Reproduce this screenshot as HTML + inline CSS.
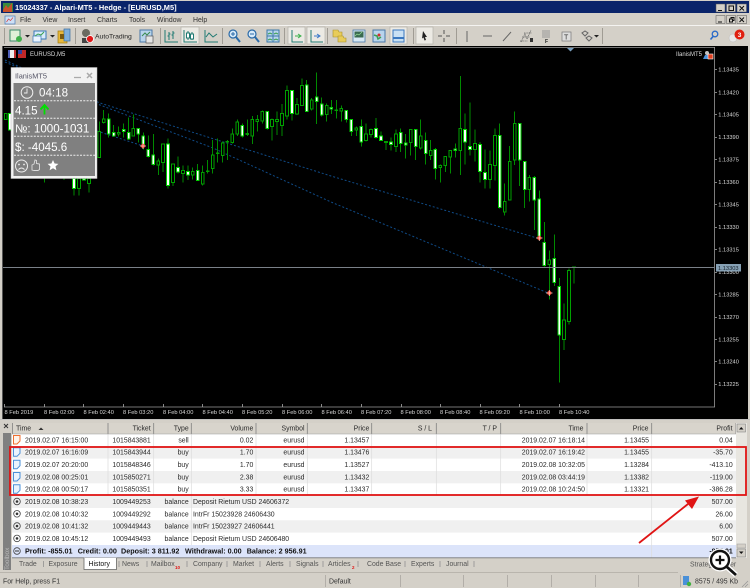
<!DOCTYPE html>
<html><head><meta charset="utf-8"><title>MT5</title>
<style>
html,body{margin:0;padding:0;background:#d4d0c8;width:750px;height:588px;overflow:hidden}
svg{display:block}
text{font-family:"Liberation Sans",sans-serif;font-size:6.9px;fill:#2a2a2a}
.e{text-anchor:end}
.ax{font-size:5.7px;fill:#d8d8d8}
.p{font-size:11.6px;fill:#fff}
.m{font-size:6.9px;fill:#333}
.t{font-size:6.9px;fill:#555}
.w{stroke:#008a00;stroke-width:3;fill:none}
.wb{fill:#fff;stroke:#00d000;stroke-width:2.6}
.hb{fill:#000;stroke:#00a000;stroke-width:3}
.c{shape-rendering:crispEdges}
.tl{fill:none;stroke:#0f4a86;stroke-width:1;stroke-dasharray:2 2}
</style></head><body>
<svg width="750" height="588" viewBox="0 0 750 588" xmlns="http://www.w3.org/2000/svg">
<rect width="750" height="588" fill="#d4d0c8"/>
<!-- title bar -->
<rect x="1" y="1" width="748" height="12" fill="#0a246a"/>
<rect x="3" y="3" width="10" height="9" fill="#3a8a3a"/><path d="M3 10l3-5 2 3 4-5v9H3z" fill="#c8502a"/>
<text x="15" y="10" style="font-size:7.4px;font-weight:bold;fill:#fff">15024337 - Alpari-MT5 - Hedge - [EURUSD,M5]</text>
<g fill="#d4d0c8" stroke="#555" stroke-width=".5">
<rect x="716" y="4" width="9" height="8"/><rect x="726.5" y="4" width="9" height="8"/><rect x="737" y="4" width="9.5" height="8"/>
<rect x="716" y="15.5" width="9" height="8"/><rect x="726.5" y="15.5" width="9" height="8"/><rect x="737" y="15.5" width="9.5" height="8"/>
</g>
<g fill="none" stroke="#111" stroke-width="1">
<path d="M718 10.5h4M729 6h4.5v4.5h-4.5zM739.5 6l4.5 4.5M744 6l-4.5 4.5"/>
<path d="M718 22h4M729.5 19h3v3h-3zM731 19v-1.5h3v3h-1.5M739.5 17.5l4.5 4.5M744 17.5l-4.5 4.5"/>
</g>
<!-- menu -->
<rect x="5" y="16" width="10" height="8" fill="#cfe0f5" stroke="#4a7ab5" stroke-width=".7"/><path d="M6.5 22l2-3 2 1.5 2.5-3" stroke="#d04040" fill="none" stroke-width=".7"/>
<text class="m" x="20" y="22">File</text><text class="m" x="42.5" y="22">View</text><text class="m" x="68" y="22">Insert</text><text class="m" x="97" y="22">Charts</text><text class="m" x="129" y="22">Tools</text><text class="m" x="157" y="22">Window</text><text class="m" x="193" y="22">Help</text>
<path d="M0 25.5h750" stroke="#fff" stroke-width=".7"/>
<!-- toolbar -->
<g stroke="#a09c94" stroke-width="1">
<path d="M4.5 28v16M75.5 28v16M160.5 28v16M222.5 28v16M284.5 28v16M327.5 28v16M413.5 28v16M456.5 28v16M602.5 28v16"/>
</g>
<g fill="#eceae4" stroke="#b5b2aa" stroke-width=".7">
<rect x="181" y="27" width="18" height="17"/><rect x="288" y="27" width="17" height="17"/><rect x="307" y="27" width="18" height="17"/><rect x="390" y="27" width="17" height="17"/><rect x="416" y="27" width="17" height="17"/>
</g>
<!-- left icons -->
<rect x="10" y="30" width="10" height="11" fill="#dff0d8" stroke="#3b8a6a"/><circle cx="19" cy="39" r="3" fill="#3fb04a"/>
<path d="M25 35h5l-2.5 2.5z M50 35h5l-2.5 2.5z M594 35h5l-2.5 2.5z" fill="#222"/>
<rect x="34" y="31" width="12" height="8" fill="#d8ebfa" stroke="#3a78b8"/><rect x="33" y="36" width="8" height="6" fill="#eaf4ff" stroke="#3a78b8" stroke-width=".7"/><path d="M35 36l3-2 3 1 3-3" stroke="#3aa050" fill="none"/>
<rect x="58" y="31" width="9" height="12" fill="#e8b83a" stroke="#a07a10" stroke-width=".7"/><rect x="64" y="29" width="6" height="12" fill="#7fb0dc" stroke="#3a6ea0" stroke-width=".7"/><rect x="60" y="34" width="4" height="5" fill="#7a5a10"/>
<circle cx="86" cy="33" r="4" fill="#6a6a60"/><path d="M82 38h9v5h-9z" fill="#444"/><circle cx="90" cy="39" r="3.5" fill="#e01818" stroke="#fff" stroke-width=".8"/>
<text x="95" y="38.5" style="font-size:6.8px;fill:#222">AutoTrading</text>
<rect x="140" y="30" width="12" height="12" fill="#b8d4ec" stroke="#4a78a8"/><rect x="146" y="36" width="7" height="7" fill="#e6e6e6" stroke="#555" stroke-width=".7"/><path d="M142 36l3-3 2 2 3-3" stroke="#3a8a50" fill="none"/>
<!-- chart type -->
<g fill="none" stroke="#1f7a72" stroke-width="1">
<path d="M165 30v12h13M169 32v8M167.5 36h1.5M169 34h1.5M173 31v8M171.5 35h1.5M173 33h1.5"/>
<path d="M184 30v12h13M188 31v9M192 32v8" />
<rect x="186.5" y="33" width="3" height="5" fill="#fff"/><rect x="190.5" y="34" width="3" height="5" fill="#fff"/>
<path d="M205 30v12h13M206 37l3-4 4 4 4-3" />
</g>
<g fill="#d8ebfa" stroke="#2a6aa8" stroke-width="1.2">
<circle cx="233" cy="34" r="4"/><circle cx="252" cy="34" r="4"/>
</g>
<path d="M236 37l4 5M255 37l4 5" stroke="#2a6aa8" stroke-width="2"/>
<path d="M231 34h4M233 32v4M250 34h4" stroke="#2a6aa8"/>
<rect x="267" y="30" width="12" height="12" fill="#b8d4ec" stroke="#3a78a8"/><path d="M267 36h12M273 30v12" stroke="#3a78a8"/><path d="M268 34l2-1 2 1M274 34l2-1 2 1M268 40l2-1 2 1M274 40l2-1 2 1" stroke="#3aa050" fill="none"/>
<g fill="none" stroke="#1f7a72"><path d="M292 30v12h11"/><path d="M311 30v12h12"/></g>
<path d="M295 36h5M298 34l3 2-3 2" stroke="#3ab04a" fill="none"/><path d="M314 36h5M317 34l3 2-3 2" stroke="#3a78c8" fill="none"/>
<path d="M333 30h5l1 2h3v5h-9z" fill="#e8cc5a" stroke="#a8902a" stroke-width=".6"/><path d="M338 36h5l1 2h2v4h-8z" fill="#e8cc5a" stroke="#a8902a" stroke-width=".6"/>
<rect x="353" y="30" width="12" height="12" fill="#d8e8f4" stroke="#4a78a8" stroke-width=".8"/><rect x="354.5" y="31.5" width="9" height="6" fill="#3a6a50"/><path d="M355 36l2-2 2 1 3-3" stroke="#9ae09a" fill="none" stroke-width=".7"/>
<rect x="373" y="30" width="12" height="12" fill="#b8d4ec" stroke="#4a78a8"/><path d="M374 35l3 1 1 3 3-2" stroke="#3aa050" fill="none" stroke-width="1.5"/><circle cx="379" cy="35" r="1.5" fill="#d03030"/>
<rect x="393" y="30" width="11" height="12" fill="#c8e0f4" stroke="#3a78c0"/><rect x="393" y="37" width="11" height="2" fill="#3a78c0"/>
<!-- drawing -->
<path d="M423 31l4 6-2 0 1 3-1.5.5-1-3-1.5 1z" fill="#222"/>
<path d="M444 30v4M444 38v4M438 36h4M446 36h4" stroke="#555"/>
<path d="M467 31v11M483 36h9M503 41l8-9" stroke="#666" stroke-width="1"/>
<path d="M521 42l4-8 2 5 4-9M524 33h8M522 37h8M520 41h8" stroke="#666" stroke-width=".8" fill="none" stroke-dasharray="1 .6"/><rect x="530" y="38" width="3" height="4" fill="#333"/>
<path d="M542 31h8M542 33h8M542 35h8M542 37h8" stroke="#999"/><text x="545" y="43" style="font-size:5px;font-weight:bold;fill:#222">F</text>
<rect x="562" y="32" width="9" height="9" fill="#ddd" stroke="#777" stroke-width=".7"/><text x="564" y="39.5" style="font-size:7px;fill:#333">T</text>
<path d="M582 33l3 3 3-3-3-2zM586 38l3 3 3-3-3-2z" fill="none" stroke="#666"/>
<circle cx="715" cy="34" r="2.8" fill="none" stroke="#2a6ac8" stroke-width="1.3"/><path d="M713 36.5l-2.5 3" stroke="#2a6ac8" stroke-width="1.6"/>
<circle cx="733" cy="38" r="4" fill="#e8e8e8" stroke="#bbb" stroke-width=".5"/><circle cx="739.5" cy="34.5" r="5" fill="#e02010"/><text x="737.8" y="37" style="font-size:6.5px;font-weight:bold;fill:#fff">3</text>
<!-- chart -->
<rect x="3" y="46" width="745" height="373" fill="#000"/>
<path d="M4 47.5h711M714.5 47v360M4 407h711" stroke="#9a9a9a" stroke-width=".8" fill="none"/>
<path d="M2.5 46v373" stroke="#555"/>
<path d="M567 48h7l-3.5 3.5z" fill="#7aa0c0"/>
<rect x="8" y="50" width="8" height="8" fill="#c03030"/><rect x="10" y="50" width="4" height="8" fill="#f0f0f0"/><rect x="8" y="50" width="2" height="8" fill="#5060b8"/>
<rect x="18" y="50" width="8" height="8" fill="#c02828"/><rect x="18" y="50" width="4" height="4" fill="#3040a0"/>
<text x="30" y="56.2" style="font-size:6px;fill:#ddd">EURUSD,M5</text>
<text x="676" y="56.2" style="font-size:6px;fill:#ddd">IlanisMT5</text>
<circle cx="707" cy="53" r="2" fill="#c0c0c0"/><path d="M703 59l2-4h3v4z" fill="#4a90d8"/><rect x="708" y="54" width="5" height="5" fill="#e04020" stroke="#fff" stroke-width=".6"/>
<!-- grid ticks -->
<path d="M4.5 404v3M44.5 404v3M83.5 404v3M123.5 404v3M163.5 404v3M202.5 404v3M242.5 404v3M282.5 404v3M321.5 404v3M361.5 404v3M401.5 404v3M440.5 404v3M480.5 404v3M519.5 404v3M559.5 404v3" stroke="#aaa" stroke-width=".8"/>
<path d="M715 69.5h2M715 92.5h2M715 114.5h2M715 137.5h2M715 159.5h2M715 182.5h2M715 204.5h2M715 227.5h2M715 249.5h2M715 272.5h2M715 294.5h2M715 317.5h2M715 339.5h2M715 361.5h2M715 384.5h2" stroke="#aaa" stroke-width=".8"/>
<g class="axg">
<text class="ax" x="718.3" y="71.3">1.13435</text><text class="ax" x="718.3" y="94.3">1.13420</text><text class="ax" x="718.3" y="116.7">1.13405</text><text class="ax" x="718.3" y="139">1.13390</text><text class="ax" x="718.3" y="161.7">1.13375</text><text class="ax" x="718.3" y="184">1.13360</text><text class="ax" x="718.3" y="206.7">1.13345</text><text class="ax" x="718.3" y="229">1.13330</text><text class="ax" x="718.3" y="251.5">1.13315</text><text class="ax" x="718.3" y="274">1.13300</text><text class="ax" x="718.3" y="296.5">1.13285</text><text class="ax" x="718.3" y="319">1.13270</text><text class="ax" x="718.3" y="341.5">1.13255</text><text class="ax" x="718.3" y="363.5">1.13240</text><text class="ax" x="718.3" y="386">1.13225</text>
<text class="ax" x="4.5" y="414">8 Feb 2019</text><text class="ax" x="44" y="414">8 Feb 02:00</text><text class="ax" x="83.5" y="414">8 Feb 02:40</text><text class="ax" x="123" y="414">8 Feb 03:20</text><text class="ax" x="163" y="414">8 Feb 04:00</text><text class="ax" x="202.5" y="414">8 Feb 04:40</text><text class="ax" x="242" y="414">8 Feb 05:20</text><text class="ax" x="282" y="414">8 Feb 06:00</text><text class="ax" x="321.5" y="414">8 Feb 06:40</text><text class="ax" x="361" y="414">8 Feb 07:20</text><text class="ax" x="400.5" y="414">8 Feb 08:00</text><text class="ax" x="440" y="414">8 Feb 08:40</text><text class="ax" x="479.5" y="414">8 Feb 09:20</text><text class="ax" x="519.5" y="414">8 Feb 10:00</text><text class="ax" x="559" y="414">8 Feb 10:40</text>
</g>
<!-- trend lines -->
<path class="tl" d="M5 62L100 103L331 176L537 238"/>
<path class="tl" d="M5 60L100 105L213 148L331 202L548 293"/>
<path class="tl" d="M97 131L143 146"/>
<!-- candles G3 -->
<g class="c" transform="translate(0,60) scale(.33333)">
<path class="w" d="M17 160V178M30 160V210M133 355V368M192 355V360M222 355V407M237 355V407M252 355V360M267 355V398M298 185V292"/>
<path class="wb" d="M26 160h8V210h-8zM218 355h8V385h-8zM248 355h8V360h-8z"/>
<path class="hb" d="M13 160h8V178h-8zM233 355h8V385h-8zM263 355h8V370h-8zM294 215h8V292h-8z"/>
</g>
<!-- candles G6 -->
<g class="c" transform="translate(100,60) scale(.33333)">
<path class="w" d="M11 150V190M26 160V232M41 195V230M56 200V230M71 190V232M86 173V240M100 163V230M115 205V248M130 218V268M145 226V292M160 222V316M175 295V345M189 252V336M204 236V386M219 312V378M234 290V340M249 316V368M264 316V360M278 322V358M293 312V362M308 316V376M323 300V340M338 240V340M353 236V308M368 244V308M382 240V300M397 205V250M412 178V228M427 190V232M442 178V228M457 168V252M472 165V215M487 151V190M502 153V208M516 176V242M531 155V225M546 132V228M561 76V178M576 90V182M591 114V165M606 56V138M620 60V156M635 114V152M650 38V192M665 112V170M680 130V185"/>
<path class="wb" d="M22 177h8V222h-8zM37 218h8V228h-8zM67 208h8V215h-8zM82 218h8V237h-8zM111 205h8V222h-8zM126 228h8V258h-8zM141 268h8V290h-8zM156 285h8V314h-8zM200 252h8V376h-8zM230 322h8V336h-8zM260 335h8V345h-8zM289 331h8V361h-8zM423 196h8V228h-8zM498 155h8V205h-8zM572 92h8V160h-8zM616 75h8V155h-8zM646 111h8V124h-8zM661 132h8V165h-8z"/>
<path class="hb" d="M7 177h8V187h-8zM52 217h8V222h-8zM96 205h8V228h-8zM171 303h8V315h-8zM185 252h8V308h-8zM215 312h8V368h-8zM245 332h8V341h-8zM274 335h8V345h-8zM304 338h8V372h-8zM334 285h8V325h-8zM364 249h8V287h-8zM393 222h8V248h-8zM408 186h8V222h-8zM453 178h8V228h-8zM468 178h8V185h-8zM483 154h8V183h-8zM512 178h8V200h-8zM527 178h8V185h-8zM542 160h8V197h-8zM557 92h8V168h-8zM587 133h8V162h-8zM602 76h8V136h-8zM631 120h8V147h-8zM676 136h8V164h-8zM319 333h8V335h-8zM349 279h8V281h-8zM378 244h8V246h-8zM438 221h8V223h-8z"/>
</g>
<!-- candles G7 -->
<g class="c" transform="translate(330,60) scale(.33333)">
<path class="w" d="M4 120V162M19 120V175M34 136V184M49 151V188M64 178V228M79 200V228M94 178V260M108 190V245M123 205V232M138 174V235M153 214V243M168 245V270M183 232V272M198 208V276M212 205V276M227 222V296M242 208V286M257 208V300M272 178V268M287 218V314M302 240V300M316 264V358M331 314V368M346 290V336M361 270V340M376 250V292M391 48V345M405 160V314M420 128V286M435 208V304M450 246V368M465 268V386M480 272V386M495 205V362M509 190V445M524 370V466M539 258V422M554 154V315M569 190V378M584 304V444M598 345V425M613 348V510M628 392V534"/>
<path class="wb" d="M0 142h8V147h-8zM45 152h8V178h-8zM60 178h8V215h-8zM90 200h8V246h-8zM134 205h8V232h-8zM149 228h8V241h-8zM179 246h8V254h-8zM208 218h8V250h-8zM223 249h8V255h-8zM253 208h8V260h-8zM283 241h8V281h-8zM312 268h8V326h-8zM372 267h8V272h-8zM401 208h8V246h-8zM416 259h8V268h-8zM446 254h8V335h-8zM461 338h8V358h-8zM505 227h8V443h-8zM565 190h8V300h-8zM580 304h8V389h-8zM609 353h8V420h-8zM624 417h8V534h-8z"/>
<path class="hb" d="M30 145h8V153h-8zM75 204h8V210h-8zM104 222h8V241h-8zM119 208h8V223h-8zM194 222h8V260h-8zM238 208h8V247h-8zM268 228h8V264h-8zM298 272h8V287h-8zM327 316h8V323h-8zM342 290h8V317h-8zM357 272h8V291h-8zM387 205h8V272h-8zM431 250h8V268h-8zM476 314h8V358h-8zM491 227h8V316h-8zM520 424h8V456h-8zM535 304h8V420h-8zM550 190h8V300h-8zM594 353h8V389h-8zM15 150h8V152h-8zM164 245h8V247h-8z"/>
</g>
<!-- candles G8 -->
<g class="c" transform="translate(480,200) scale(.33333)">
<path class="w" d="M193 66V200M208 152V298M223 104V258M238 234V548M252 310V450M267 205V373M282 200V250"/>
<path class="wb" d="M189 127h8V197h-8zM219 175h8V247h-8zM234 260h8V405h-8z"/>
<path class="hb" d="M204 180h8V194h-8zM248 360h8V418h-8zM263 212h8V364h-8zM278 201h8V203h-8z"/>
</g>
<!-- horizontal line -->
<path d="M3 267.5h712" stroke="#7a8088" stroke-width=".9"/>
<rect x="716" y="264" width="25" height="7.5" fill="#86a0b4"/>
<text x="718" y="270" style="font-size:5.7px;fill:#15202a">1.13303</text>
<!-- markers -->
<g>
<circle cx="143" cy="146" r="2.2" fill="#f03020"/><path d="M140 146h6M143 143v6" stroke="#ffd0c0" stroke-width=".8"/>
<circle cx="539.3" cy="238" r="2.2" fill="#f03020"/><path d="M536 238h6.5M539.3 235v6" stroke="#ffd0c0" stroke-width=".8"/>
<circle cx="549.3" cy="293" r="2.2" fill="#f03020"/><path d="M546 293h6.5M549.3 290v6" stroke="#ffd0c0" stroke-width=".8"/>
</g>
<!-- panel -->
<rect x="11" y="67.5" width="86" height="111" fill="#f2f2f2" stroke="#bbb" stroke-width=".5"/>
<rect x="13.5" y="83" width="81.5" height="93" fill="#808080"/>
<text x="15" y="78.5" style="font-size:7.4px;fill:#556">IlanisMT5</text>
<path d="M74 77.5h7" stroke="#aaa" stroke-width="1.3"/><path d="M87 73l5 5M92 73l-5 5" stroke="#aaa" stroke-width="1.5"/>
<path d="M14 100.8h81M14 118.2h81M14 136.2h81M14 155.2h81" stroke="#eee" stroke-width="1" stroke-dasharray="2 1.3"/>
<circle cx="27" cy="92.5" r="5.8" fill="none" stroke="#eee" stroke-width="1"/><path d="M27 88.5v4.5h-3" fill="none" stroke="#eee" stroke-width=".9"/>
<text class="p" x="39" y="96.5">04:18</text>
<text class="p" x="15" y="114.5">4.15</text>
<path d="M44.5 114.5v-9M40.5 109.5l4-4.5 4 4.5" fill="none" stroke="#00e000" stroke-width="1.8"/>
<text class="p" x="15" y="132.5">№: 1000-1031</text>
<text class="p" x="15" y="151">$: -4045.6</text>
<circle cx="21.5" cy="166" r="6" fill="none" stroke="#eee" stroke-width="1"/><circle cx="19" cy="164.5" r=".9" fill="#eee"/><circle cx="24" cy="164.5" r=".9" fill="#eee"/><path d="M18.5 169.5q3-3 6 0" fill="none" stroke="#eee" stroke-width=".9"/>
<path d="M32 170v-5l2-1 1-4 1.5.5v3l3 .5v5.5l-1.5 1h-4z" fill="none" stroke="#ddd" stroke-width=".9"/>
<path d="M53 160l1.6 3.5 3.8.4-2.9 2.5.9 3.8-3.4-2-3.4 2 .9-3.8-2.900-2.5 3.800-.4z" fill="#fff"/>
<!-- toolbox frame -->
<rect x="0" y="419" width="750" height="154" fill="#d4d0c8"/>
<path d="M0 419.5h750" stroke="#bbb" stroke-width=".7"/>
<path d="M4 424l4 4M8 424l-4 4" stroke="#333" stroke-width="1"/>
<rect x="3" y="433" width="8" height="137" fill="#808080"/>
<text transform="translate(9,570) rotate(-90)" style="font-size:6.5px;fill:#b8b8b8">Toolbox</text>
<!-- table -->
<rect x="12" y="423" width="724" height="135" fill="#fff"/>
<rect x="12" y="423" width="724" height="11" fill="#d8d4cc"/>
<g fill="#f0f0f0">
<rect x="12" y="446.3" width="724" height="12.3"/><rect x="12" y="471" width="724" height="12.3"/><rect x="12" y="495.7" width="724" height="12.3"/><rect x="12" y="520.3" width="724" height="12.3"/>
</g>
<rect x="12" y="545" width="724" height="12.7" fill="#dce4fa"/>
<path d="M108 434v61.7M153.7 434v61.7M191.3 434v111M256 434v61.7M307.3 434v61.7M371.7 434v61.7M436.3 434v61.7M500.7 434v61.7M587 434v61.7M651.7 434v123.5" stroke="#dcdcdc" stroke-width=".7"/>
<path d="M12.5 423v11M108 423v11M153.7 423v11M191.3 423v11M256 423v11M307.3 423v11M371.7 423v11M436.3 423v11M500.7 423v11M587 423v11M651.7 423v11M736 423v11" stroke="#808080" stroke-width=".8"/>
<path d="M12 434h724" stroke="#999" stroke-width=".6"/>
<path d="M12 557.8h724" stroke="#777" stroke-width=".8"/>
<!-- header text -->
<text x="16" y="430.5">Time</text><path d="M38.5 430h5l-2.5-2.5z" fill="#333"/>
<text class="e" x="150.7" y="430.5">Ticket</text><text class="e" x="188.7" y="430.5">Type</text><text class="e" x="253.3" y="430.5">Volume</text><text class="e" x="304.5" y="430.5">Symbol</text><text class="e" x="369.3" y="430.5">Price</text><text class="e" x="432" y="430.5">S / L</text><text class="e" x="497" y="430.5">T / P</text><text class="e" x="583.5" y="430.5">Time</text><text class="e" x="648.5" y="430.5">Price</text><text class="e" x="732.5" y="430.5">Profit</text>
<!-- rows -->
<text x="25" y="442.4">2019.02.07 16:15:00</text><text class="e" x="150.7" y="442.4">1015843881</text><text class="e" x="188.7" y="442.4">sell</text><text class="e" x="253.3" y="442.4">0.02</text><text class="e" x="304.5" y="442.4">eurusd</text><text class="e" x="369.3" y="442.4">1.13457</text><text class="e" x="585" y="442.4">2019.02.07 16:18:14</text><text class="e" x="649" y="442.4">1.13455</text><text class="e" x="732.7" y="442.4">0.04</text>
<text x="25" y="454.7">2019.02.07 16:16:09</text><text class="e" x="150.7" y="454.7">1015843944</text><text class="e" x="188.7" y="454.7">buy</text><text class="e" x="253.3" y="454.7">1.70</text><text class="e" x="304.5" y="454.7">eurusd</text><text class="e" x="369.3" y="454.7">1.13476</text><text class="e" x="585" y="454.7">2019.02.07 16:19:42</text><text class="e" x="649" y="454.7">1.13455</text><text class="e" x="732.7" y="454.7">-35.70</text>
<text x="25" y="467.1">2019.02.07 20:20:00</text><text class="e" x="150.7" y="467.1">1015848346</text><text class="e" x="188.7" y="467.1">buy</text><text class="e" x="253.3" y="467.1">1.70</text><text class="e" x="304.5" y="467.1">eurusd</text><text class="e" x="369.3" y="467.1">1.13527</text><text class="e" x="585" y="467.1">2019.02.08 10:32:05</text><text class="e" x="649" y="467.1">1.13284</text><text class="e" x="732.7" y="467.1">-413.10</text>
<text x="25" y="479.4">2019.02.08 00:25:01</text><text class="e" x="150.7" y="479.4">1015850271</text><text class="e" x="188.7" y="479.4">buy</text><text class="e" x="253.3" y="479.4">2.38</text><text class="e" x="304.5" y="479.4">eurusd</text><text class="e" x="369.3" y="479.4">1.13432</text><text class="e" x="585" y="479.4">2019.02.08 03:44:19</text><text class="e" x="649" y="479.4">1.13382</text><text class="e" x="732.7" y="479.4">-119.00</text>
<text x="25" y="491.7">2019.02.08 00:50:17</text><text class="e" x="150.7" y="491.7">1015850351</text><text class="e" x="188.7" y="491.7">buy</text><text class="e" x="253.3" y="491.7">3.33</text><text class="e" x="304.5" y="491.7">eurusd</text><text class="e" x="369.3" y="491.7">1.13437</text><text class="e" x="585" y="491.7">2019.02.08 10:24:50</text><text class="e" x="649" y="491.7">1.13321</text><text class="e" x="732.7" y="491.7">-386.28</text>
<text x="25" y="504.1">2019.02.08 10:38:23</text><text class="e" x="150.7" y="504.1">1009449253</text><text class="e" x="188.7" y="504.1">balance</text><text x="193" y="504.1">Deposit Rietum USD 24606372</text><text class="e" x="732.7" y="504.1">507.00</text>
<text x="25" y="516.4">2019.02.08 10:40:32</text><text class="e" x="150.7" y="516.4">1009449292</text><text class="e" x="188.7" y="516.4">balance</text><text x="193" y="516.4">IntrFr 15023928 24606430</text><text class="e" x="732.7" y="516.4">26.00</text>
<text x="25" y="528.7">2019.02.08 10:41:32</text><text class="e" x="150.7" y="528.7">1009449443</text><text class="e" x="188.7" y="528.7">balance</text><text x="193" y="528.7">IntrFr 15023927 24606441</text><text class="e" x="732.7" y="528.7">6.00</text>
<text x="25" y="541.1">2019.02.08 10:45:12</text><text class="e" x="150.7" y="541.1">1009449493</text><text class="e" x="188.7" y="541.1">balance</text><text x="193" y="541.1">Deposit Rietum USD 24606480</text><text class="e" x="732.7" y="541.1">507.00</text>
<text x="25" y="553.5" style="font-weight:bold;fill:#111;font-size:7.2px">Profit: -855.01</text>
<text x="77.7" y="553.5" style="font-weight:bold;fill:#111;font-size:7.2px">Credit: 0.00</text>
<text x="121" y="553.5" style="font-weight:bold;fill:#111;font-size:7.2px">Deposit: 3 811.92</text>
<text x="185" y="553.5" style="font-weight:bold;fill:#111;font-size:7.2px">Withdrawal: 0.00</text>
<text x="246.7" y="553.5" style="font-weight:bold;fill:#111;font-size:7.2px">Balance: 2 956.91</text>
<text class="e" x="732.7" y="553.5" style="font-weight:bold;fill:#111">-855.01</text>
<!-- row icons -->
<path d="M13.5 435.5h6.5v5.5l-3 3h-3.5z" fill="#fff3ea" stroke="#f07030" stroke-width="1"/>
<g fill="#eaf3fc" stroke="#4a90d8" stroke-width="1">
<path d="M13.5 447.8h6.5v5.5l-3 3h-3.5zM13.5 460.2h6.5v5.5l-3 3h-3.5zM13.5 472.5h6.5v5.5l-3 3h-3.5zM13.5 484.8h6.5v5.5l-3 3h-3.5z"/>
</g>
<g fill="none" stroke="#444" stroke-width=".8">
<circle cx="17" cy="501.5" r="3.3"/><circle cx="17" cy="513.8" r="3.3"/><circle cx="17" cy="526" r="3.3"/><circle cx="17" cy="538.4" r="3.3"/><circle cx="17" cy="551" r="3.3"/>
</g>
<g fill="#333"><circle cx="17" cy="501.5" r="1.3"/><circle cx="17" cy="513.8" r="1.3"/><circle cx="17" cy="526" r="1.3"/><circle cx="17" cy="538.4" r="1.3"/></g>
<path d="M15 551h4" stroke="#333"/>
<!-- scrollbar -->
<rect x="736" y="423" width="11" height="135" fill="#e8e6e0"/>
<rect x="737" y="424" width="8.5" height="8" fill="#d4d0c8" stroke="#777" stroke-width=".5"/><path d="M739 429.5h4.5l-2.25-2.5z" fill="#111"/>
<rect x="737" y="544" width="8.5" height="4" fill="#d4d0c8" stroke="#999" stroke-width=".5"/>
<rect x="737" y="549" width="8.5" height="8" fill="#d4d0c8" stroke="#777" stroke-width=".5"/><path d="M739 551.5h4.5l-2.25 2.5z" fill="#111"/>
<!-- red box + arrow -->
<rect x="10" y="447" width="736" height="48" fill="none" stroke="#e01414" stroke-width="1.8"/>
<path d="M639 543L688 504" stroke="#e01414" stroke-width="1.8"/>
<path d="M699 496.5L685 500.5L692 509z" fill="#e01414"/>
<!-- tabs -->
<rect x="84" y="557.8" width="32.5" height="11.5" fill="#fff"/><path d="M84 558v11.5h32.5V558" fill="none" stroke="#666" stroke-width=".8"/>
<path d="M43.5 561v6M119 561v6M147 561v6M187 561v6M227 561v6M260 561v6M290 561v6M323 561v6M358 561v6M405 561v6M440 561v6M474 561v6" stroke="#888" stroke-width=".7"/>
<text class="t" x="19" y="566">Trade</text><text class="t" x="48.5" y="566">Exposure</text><text x="88.5" y="566" style="fill:#111">History</text><text class="t" x="122" y="566">News</text><text class="t" x="151" y="566">Mailbox</text><text x="175" y="569" style="font-size:4.5px;font-weight:bold;fill:#e01010">10</text><text class="t" x="193" y="566">Company</text><text class="t" x="233" y="566">Market</text><text class="t" x="266" y="566">Alerts</text><text class="t" x="296" y="566">Signals</text><text class="t" x="328" y="566">Articles</text><text x="352" y="569" style="font-size:4.5px;font-weight:bold;fill:#e01010">2</text><text class="t" x="367" y="566">Code Base</text><text class="t" x="411" y="566">Experts</text><text class="t" x="446" y="566">Journal</text><text class="t" x="690" y="566.5">Strategy Tester</text>
<!-- magnifier -->
<circle cx="720" cy="560" r="11.5" fill="#fff"/>
<path d="M727 567l9 8" stroke="#fff" stroke-width="5.5"/>
<circle cx="720" cy="560" r="9" fill="#fff" stroke="#111" stroke-width="2.4"/>
<path d="M715.5 560h9M720 555.5v9" stroke="#111" stroke-width="2.2"/>
<path d="M727 567l9 8" stroke="#111" stroke-width="2.8"/>
<!-- status -->
<path d="M0 572.5h678" stroke="#b0aca4" stroke-width=".8"/>
<path d="M325.5 575v12M400.5 575v12M463.5 575v12M507.5 575v12M551.5 575v12M595.5 575v12M638.5 575v12M680.5 575v12" stroke="#aaa6a0" stroke-width=".8"/>
<text class="m" x="3" y="583.5">For Help, press F1</text>
<text class="m" x="329" y="583.5">Default</text>
<rect x="683" y="576" width="6" height="9" fill="#4a90d8"/><circle cx="689" cy="584" r="2.2" fill="#40b040"/>
<text class="m" x="695" y="583.5">8575 / 495 Kb</text>
<path d="M742 587l6-6M745 587l3-3" stroke="#999" stroke-width=".8"/>
</svg>
</body></html>
